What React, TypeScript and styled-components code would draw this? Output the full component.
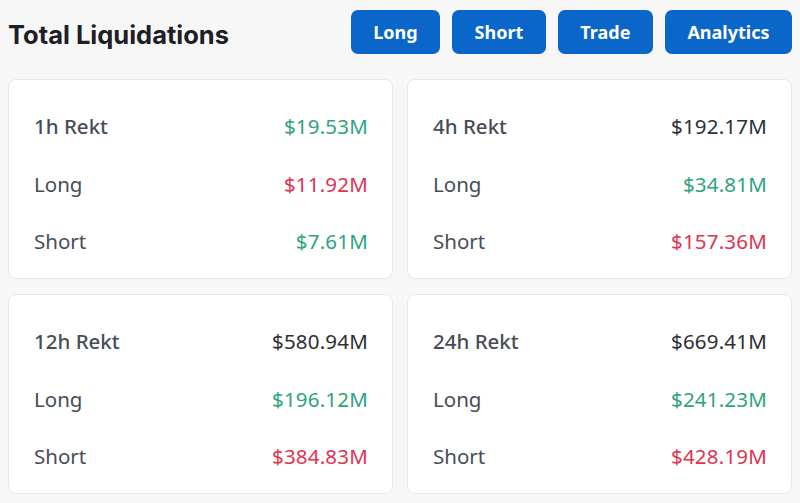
import React from "react";
import styled, { createGlobalStyle } from "styled-components";

const GlobalStyle = createGlobalStyle`
  html, body {
    margin: 0;
    padding: 0;
    background: #f7f7f8;
  }
  body {
    font-family: "Noto Sans", "Liberation Sans", sans-serif;
  }
`;

type Tone = "up" | "down" | "plain";

type IRow = {
  label: string;
  value: string;
  tone: Tone;
};

type IPeriod = {
  rows: IRow[];
};

const periods: IPeriod[] = [
  {
    rows: [
      { label: "1h Rekt", value: "$19.53M", tone: "up" },
      { label: "Long", value: "$11.92M", tone: "down" },
      { label: "Short", value: "$7.61M", tone: "up" },
    ],
  },
  {
    rows: [
      { label: "4h Rekt", value: "$192.17M", tone: "plain" },
      { label: "Long", value: "$34.81M", tone: "up" },
      { label: "Short", value: "$157.36M", tone: "down" },
    ],
  },
  {
    rows: [
      { label: "12h Rekt", value: "$580.94M", tone: "plain" },
      { label: "Long", value: "$196.12M", tone: "up" },
      { label: "Short", value: "$384.83M", tone: "down" },
    ],
  },
  {
    rows: [
      { label: "24h Rekt", value: "$669.41M", tone: "plain" },
      { label: "Long", value: "$241.23M", tone: "up" },
      { label: "Short", value: "$428.19M", tone: "down" },
    ],
  },
];

const tabs = ["Long", "Short", "Trade", "Analytics"];

const toneColor = {
  up: "#2ea37c",
  down: "#e0334f",
  plain: "#2b2f36",
};

const Page = styled.div`
  padding: 10px 8px 9px 8px;
`;

const Header = styled.div`
  display: flex;
  align-items: center;
  justify-content: space-between;
  height: 44px;
`;

const Title = styled.h1`
  margin: 4px 0 0 0;
  font-family: "Inter", "Liberation Sans", sans-serif;
  font-size: 25.5px;
  font-weight: 700;
  color: #1e2026;
`;

const Tabs = styled.div`
  display: flex;
  gap: 12px;
`;

const TabButton = styled.button`
  height: 44px;
  padding: 0 22.5px;
  border: none;
  border-radius: 7px;
  background: #0a66c8;
  color: #ffffff;
  font-family: "Noto Sans", "Liberation Sans", sans-serif;
  font-size: 18px;
  font-weight: 700;
  cursor: pointer;
`;

const Grid = styled.div`
  display: grid;
  grid-template-columns: 385px 385px;
  justify-content: space-between;
  row-gap: 15px;
  margin-top: 25px;
`;

const Card = styled.div`
  height: 200px;
  box-sizing: border-box;
  background: #ffffff;
  border: 1px solid #e6e8ea;
  border-radius: 8px;
  padding: 30px 24px 0 25px;
  display: flex;
  flex-direction: column;
`;

const Row = styled.div`
  display: flex;
  justify-content: space-between;
  align-items: center;
  height: 32px;
  & + & {
    margin-top: 25.5px;
  }
`;

const Label = styled.span<{ $head?: boolean }>`
  font-size: 20.5px;
  font-weight: ${(p) => (p.$head ? 500 : 400)};
  color: #474d57;
`;

const Value = styled.span<{ $tone: Tone }>`
  font-size: 20.5px;
  letter-spacing: 0.2px;
  color: ${(p) => toneColor[p.$tone]};
`;

const App = () => {
  return (
    <Page>
      <GlobalStyle />
      <Header>
        <Title>Total Liquidations</Title>
        <Tabs>
          {tabs.map((tab) => (
            <TabButton key={tab}>{tab}</TabButton>
          ))}
        </Tabs>
      </Header>

      <Grid>
        {periods.map((period, index) => (
          <Card key={index}>
            {period.rows.map((row, i) => (
              <Row key={row.label}>
                <Label $head={i === 0}>{row.label}</Label>
                <Value $tone={row.tone}>{row.value}</Value>
              </Row>
            ))}
          </Card>
        ))}
      </Grid>
    </Page>
  );
};

export default App;
